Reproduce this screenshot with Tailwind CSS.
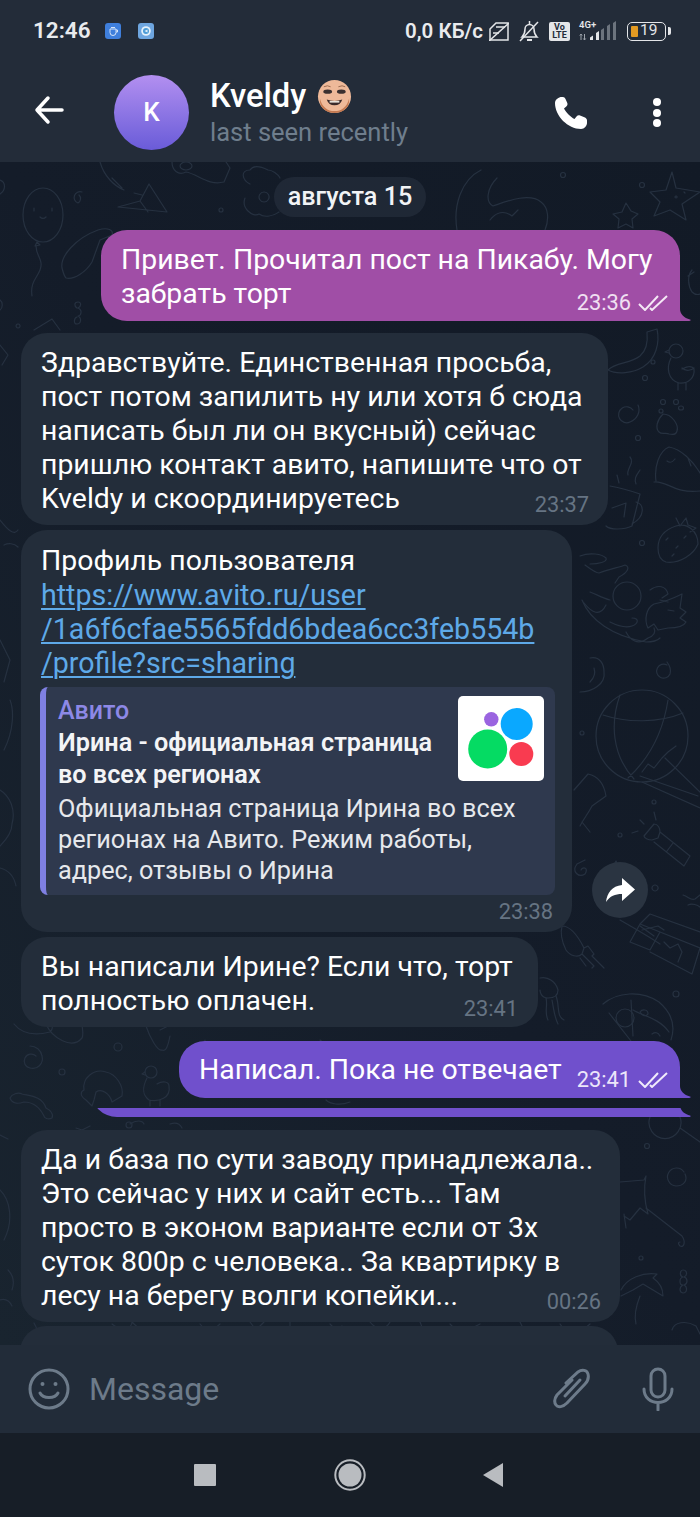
<!DOCTYPE html>
<html lang="ru">
<head>
<meta charset="UTF-8">
<title>Kveldy</title>
<script src="https://cdn.jsdelivr.net/npm/@tailwindcss/browser@4"></script>
</head>
<body class="bg-[#141c28] font-['Roboto',sans-serif] text-white">
<div class="w-[700px] h-[1517px] flex flex-col overflow-hidden">

  <!-- status bar + toolbar -->
  <header class="bg-[#232c39] h-[162px] shrink-0">
    <div class="h-[62px] flex items-center pl-[33px] pr-[29px] text-[#e9ebee]">
      <span class="text-[22.500px] font-semibold">12:46</span>
      <svg class="ml-[14px]" width="16" height="16" viewBox="0 0 16 16"><rect width="16" height="16" rx="3" fill="#3f7fdc"/><path d="M5 6h6v3.500a3 3 0 0 1-6 0zM11 7h1.500v2H11M6 4.500h4" fill="none" stroke="#d5e4f8" stroke-width="1"/></svg>
      <svg class="ml-[17px]" width="16" height="16" viewBox="0 0 16 16"><rect width="16" height="16" rx="3" fill="#6ea6e0"/><circle cx="8" cy="8" r="4.800" fill="#e4f1fb"/><circle cx="8" cy="8" r="3" fill="#4a9ad6"/><path d="M6.500 8 9.500 6.500V9.500z" fill="#e4f1fb"/></svg>
      <span class="ml-auto text-[20.500px] font-semibold">0,0 КБ/с</span>
      <svg class="ml-[6px]" width="20" height="20" viewBox="0 0 20 20" fill="none" stroke="#e4e6e9" stroke-width="1.500"><path d="M1 8 7 2h12v17H1z"/><path d="M0 20 20 2"/><path d="M7 6h9M4 12h6"/></svg>
      <svg class="ml-[10px]" width="21" height="22" viewBox="0 0 21 22" fill="none" stroke="#e4e6e9" stroke-width="1.500"><path d="M3 17c2-2 3-4 3-8a4.500 4.500 0 0 1 9 0c0 4 1 6 3 8z"/><path d="M8 20h5" stroke-width="2"/><path d="M10.500 1v3"/><path d="M1 21 19 2"/></svg>
      <div class="ml-[9px] w-[21px] h-[19px] rounded-[2px] bg-[#e4e6e9] flex flex-col items-center justify-center text-[#232c39] text-[9px] leading-[8.500px] font-bold"><span>Vo</span><span>LTE</span></div>
      <div class="ml-[9px] relative w-[38px] h-[20px]">
        <span class="absolute left-0 top-[-1px] text-[9.500px] font-semibold leading-[10px] text-[#e4e6e9]">4G+</span>
        <svg class="absolute left-0 top-0" width="38" height="20" viewBox="0 0 38 20"><path d="M2 19v-6M5.500 19v-6M0.800 14.500 2 13l1.200 1.500M4.300 17.500l1.200 1.500 1.200-1.500" stroke="#9ca3ab" stroke-width="1" fill="none"/><path d="M11 19v-2.500l3-2V19zM17 19v-7l3-2v9z" fill="#e4e6e9"/><path d="M22 19V9l3-2v12zM28 19V5l3-2v16zM34 19V2l3-2v19z" fill="#6c747e"/></svg>
      </div>
      <div class="ml-[10px] flex items-center">
        <div class="w-[39px] h-[19px] rounded-[5px] border-[1.600px] border-[#e4e6e9] flex items-center pl-[3px]">
          <span class="w-[7px] h-[11px] rounded-[1px] bg-[#e39a22]"></span>
          <span class="ml-[2px] text-[15.500px] leading-none text-[#e4e6e9]">19</span>
        </div>
        <span class="ml-[2px] w-[3px] h-[8px] rounded-r-[2px] bg-[#e4e6e9]"></span>
      </div>
    </div>
    <div class="h-[100px] flex items-start">
      <svg class="ml-[33px] mt-[33px]" width="32" height="30" viewBox="0 0 32 30" fill="none" stroke="#fff" stroke-width="3.500" stroke-linecap="round" stroke-linejoin="round"><path d="M29 15H4M15 3 4 15l11 12"/></svg>
      <div class="ml-[49px] mt-[13px] w-[75px] h-[75px] rounded-full bg-linear-to-b from-[#b38ff0] to-[#6a5bd8] flex items-center justify-center text-[26px] font-medium">K</div>
      <div class="ml-[21px] mt-[14px] flex flex-col">
        <div class="flex items-center h-[40px]">
          <span class="text-[32.700px] font-medium leading-none">Kveldy</span>
          <svg class="ml-[11px]" width="35" height="35" viewBox="0 0 36 36"><circle cx="18" cy="18" r="17" fill="#eeb999"/><path d="M3 20c2 9 8 13 15 13s13-4 15-13c1 9-6 15-15 15S2 29 3 20z" fill="#c47a52"/><ellipse cx="11" cy="13" rx="4.500" ry="2.200" fill="#3a3030"/><ellipse cx="25" cy="13" rx="4.500" ry="2.200" fill="#3a3030"/><path d="M7 8q4-2 7 0M22 8q4-2 7 0" stroke="#9a6a50" fill="none" stroke-width="1"/><path d="M10 21q8 3 16 0q-2 6-8 6t-8-6z" fill="#3a2a2a"/><path d="M13 22.500h10v1.800H13z" fill="#e8e2da"/></svg>
        </div>
        <span class="text-[25.500px] leading-[32px] text-[#6f7e8d]">last seen recently</span>
      </div>
      <svg class="ml-[146px] mt-[34px]" width="34" height="34" viewBox="0 0 34 34" fill="#fff"><path d="M7.500 1C5 1 1 3.500 1 7c0 13 13 26 26 26 3.500 0 6-3.500 6-6v-2.500c0-1.500-1-2.500-2-3l-5-2c-1.500-.5-2.500 0-3.500 1l-2 2.500c-4-2-8.500-6.500-10.500-10.500l2.300-2c1-1 1.500-2 1-3.500L11.500 3c-.5-1.200-1.500-2-2.500-2z"/></svg>
      <div class="ml-[65px] mt-[36px] flex flex-col gap-[2.500px]">
        <span class="w-[8px] h-[8px] rounded-full bg-white"></span>
        <span class="w-[8px] h-[8px] rounded-full bg-white"></span>
        <span class="w-[8px] h-[8px] rounded-full bg-white"></span>
      </div>
    </div>
  </header>

  <!-- chat -->
  <main class="relative h-[1183px] shrink-0 overflow-hidden bg-linear-to-tr from-[#19242f] via-[#141c29] to-[#121a26]">
    <!-- wallpaper doodles -->
    <svg class="absolute inset-0" width="700" height="1183" viewBox="0 162 700 1183" fill="none" stroke="#263140" stroke-width="1.200" stroke-linecap="round" stroke-linejoin="round">
      <!-- top left -->
      <ellipse cx="43" cy="215" rx="20" ry="27"/><path d="M34 208v3M52 208v3M40 217q3 3 6 0"/><path d="M37 242l-2 4 5-1zM36 246c0 10 8 14 4 24-3 8-10 12-8 26"/>
      <path d="M82 192a5 5 0 1 0-4 11 5 5 0 0 0 1-8"/>
      <path d="M118 207l22-6 9-17 18 28zM140 201l8 11M142 195l-8-2"/>
      <path d="M62 268c-2-12 14-30 36-38 10-3 16 0 14 5l-12 5-8 22c-6 10-18 18-26 16-2-2-3-6-4-10z"/>
      <path d="M100 162c4 14 14 24 24 28M112 178l10 10"/>
      <path d="M172 162c0 8 6 14 14 10 12 2 22 14 38 10l6-14-4-6M180 166a6 4 0 1 0 12 0 6 4 0 1 0-12 0"/>
      <path d="M250 184c-8-4-10-14 0-14 4-6 14-2 18 0 4 0 10 4 12 8M245 198c-4 10 8 20 14 16 6 4 14 2 20-2M264 192a5 5 0 1 0 .1 0"/>
      <circle cx="221" cy="210" r="2"/><path d="M77 308c-3-2-3-6 1-6s3 5 0 6c5 2 3 8 0 8 4 2 3 8-1 8s-3-6 0-7"/>
      <path d="M34 330l18-11 8 11M18 324a2 2 0 1 0 .1 0"/>
      <path d="M0 180c6 2 6 10 0 14M0 300c3 2 3 8 0 10"/>
      <!-- top right -->
      <path d="M457 230c-4-24 4-50 24-60M497 178c-10 10-12 24-4 28 12-4 36-14 48-4 8 6 8 18 4 28"/>
      <path d="M490 220c6-8 14-10 22-4l6-6"/>
      <circle cx="563" cy="175" r="2.500"/><circle cx="642" cy="185" r="2.500"/>
      <path d="M613 214l9-2 4-9 5 8 7 3-6 5 1 9-7-4-8 4 1-9z"/>
      <path d="M672 172l4 16 24 4-18 12 4 16-16-10-16 6 6-14-10-10 16-2zM676 196a1 1 0 1 0 .1 0M684 192l1 1"/>
      <path d="M692 270c-5 6-4 16 0 22 4 4 8 2 8 2M688 276l6-4"/>
      <!-- between bubbles, right column -->
      <path d="M608 370c8-8 22-6 32-14 7-6 8-14 7-24l10-3c3 14-1 30-14 38-10 6-26 8-35 3z"/>
      <circle cx="653" cy="362" r="2"/><circle cx="645" cy="378" r="2.500"/>
      <circle cx="676" cy="351" r="7"/><path d="M669 350l-4 2 4 1M671 358c-5 10-3 22 8 25 10 1 16-6 15-14-2-4-8-2-12 0M678 383v7M686 383v7M682 368c4 4 10 2 12 0"/>
      <path d="M633 410a8 8 0 1 0-3 12c7-3 11-10 8-17"/>
      <path d="M663 414c-6 6-8 14-4 18 3 3 7 0 10 2 4 1 7 1 8-3 2-6-5-17-14-17z"/><circle cx="663" cy="402" r="2.500"/><circle cx="676" cy="402" r="2.500"/><ellipse cx="681" cy="408" rx="2.500" ry="2"/><ellipse cx="661" cy="411" rx="2" ry="2"/>
      <circle cx="638" cy="438" r="2.500"/>
      <path d="M656 481c-2-14 3-30 13-34 12 2 24 14 31 26M654 482c12-2 20 12 46 9M667 461c3 2 5 2 8-2M688 458l3 8"/>
      <path d="M630 457c5 6-4 12-2 18M640 470c-4 6-6 8-4 14M617 475l2 8"/>
      <path d="M610 486c12 2 30 8 30 8l-8 32c-8 4-22 4-26 0M636 502c8 2 10 14-4 22M612 508l14-5-2 14"/>
      <path d="M658 548c0-10 6-18 18-22 12-4 22 6 22 18-4 10-18 20-32 18-6-2-8-8-8-14zM680 526l-4-8M680 526l6-8 2 7 8 3-6 4M666 540l2-2M676 548l2-2M684 538l2-2M672 556l2-2"/>
      <circle cx="642" cy="543" r="2.500"/>
      <path d="M580 556c10-4 22-2 26 2 2 4-8 6-16 6M585 565c8 6 12 8 14 8 10-4 22-6 26-8 6 2 2 8-6 12l-4 6"/>
      <circle cx="627" cy="596" r="14"/><path d="M610 600c-8-2-14-6-20-8M606 605c-6 12-14 8-22-2"/>
      <path d="M650 590c8-6 16-4 18 4l-6 4M648 628c-4-8-2-20 6-24 10-2 20-6 28-10l-2 14 6 4-6 6 6 4c-2 4-10 6-18 6l-10 2-4-6zM660 600l8 2M668 610l6 1"/>
      <path d="M582 600c8 20 30 36 64 42 6 0 12-2 14-4M626 632c4 8 12 14 22 6 6-2 8-6 6-10M610 622c8 4 16 6 22 4 6-2 8-8 0-8"/>
      <path d="M590 658c10-2 14 6 14 14 2 12-12 20-24 20M594 668c2 6 0 10-4 14"/>
      <path d="M667 665a7 7 0 1 0 3 9c1-3 0-8-3-12"/>
      <!-- balloon -->
      <circle cx="642" cy="736" r="46"/><path d="M603 715c24 8 56 8 80-2M620 695c-10 28-8 60 14 84M668 700c-4 26-14 54-40 78"/>
      <path d="M642 772l6-8 6 4 8-10 6-6 8-6"/><path d="M640 776l58 20M642 782l58 26M665 758l35 34"/><circle cx="582" cy="733" r="2"/>
      <circle cx="654" cy="802" r="2"/><path d="M654 812l2 8M640 820l4 4M632 833l6-2"/><circle cx="620" cy="835" r="2"/>
      <path d="M644 836l10-12c4 0 6 4 6 8l-2 6-6 2c-4 0-8-2-8-4zM660 832l30 24-6 10-30-24M673 843l-6 8"/>
      <path d="M574 790l14-16c10 2 16 10 18 22l-14 10c-4 8-8 12-12 20M582 822l8 10"/>
      <path d="M585 860l-8 4c-6 8 2 14 8 10 4-6-2-8-4-4"/>
      <path d="M683 895c6 2 8 6 12 4l5-4M688 905c4-2 10 0 12 2M655 885a3 3 0 1 0 .1 0"/>
      <path d="M612 870l4-9 4 9 10 1-7 6 2 9"/>
      <path d="M640 926l14 10M642 930l16-4 6 4"/><path d="M620 920c14 8 34 20 40 24"/>
      <!-- squid, chocolate -->
      <path d="M562 926c8 0 16 10 22 22l-2 6c-4 4-12 2-16-4-4-8-6-16-4-24zM584 948l4-2 6 8-2 2 12 12M582 954l12 12-2 2M580 958l6 8"/>
      <path d="M640 924l10-10 50 18M630 942l10-18 20 8-10 18zM660 932l40 16-8 26-42-22M664 942l6 6 8-4 4 8-4 10"/>
      <path d="M540 978c8-2 16 4 18 12 0 6-4 8-10 8-8 0-8-8-8-8M546 998c2 8-2 14 2 22M556 996c4 10 0 20 8 24M552 1000c2 10 2 16 6 24"/>
      <!-- pizza -->
      <path d="M603 1004c14-12 38-14 56-2 14 12 16 26 12 38M609 1013l22 28M631 1000l2 36M633 1010c10 6 26 8 36 22"/>
      <circle cx="625" cy="1018" r="9"/><path d="M640 1012c2-3 8-3 8 2-2 3-6 2-8-2zM652 1034c3-2 6-2 8 2"/>
      <circle cx="676" cy="994" r="3"/>
      <path d="M650 1117a16 16 0 1 0 30 0M680 1128l20 14"/>
      <!-- umbrella etc -->
      <circle cx="647" cy="1146" r="2.500"/>
      <path d="M684 1172a9 9 0 1 0-8 14c8 0 12-6 9-12"/>
      <path d="M620 1182l24-2 2-4c-2 10-2 24 2 38l-8-6-10 12-6-4M646 1208l36 28c4 6 2 12-2 10-2-2-2-4 0-4M624 1214l2 14"/>
      <circle cx="641" cy="1258" r="2"/>
      <path d="M683 1270c-3 0-4 6 0 7-4 1-4 8 0 8-4 2-4 7 0 8 4 0 5-6 1-8 4-1 4-7 0-8 4-2 3-7-1-7z"/>
      <path d="M621 1290c6-12 22-18 36-16l-4 4c6 4 10 10 10 18l-20-12-10 6-12 6M640 1296c-4 10-6 20-4 28"/>
      <path d="M672 1330c2-8 14-10 24-4l4 8"/>
      <!-- left strip -->
      <path d="M0 345l8 10-6 10M0 520c8 10 14 16 18 10M4 545c4-2 10-2 14 2M0 640l10 20-6 22M10 700c4 10 4 30-6 50M0 790c10 6 16 20 12 34 0 10-8 18-12 22M0 868c8 2 14 8 16 18"/>
      <!-- lower band -->
      <path d="M14 1024c8 10 20 12 36 8 4-4 2-8 2-8M46 1024c6 14 26 26 36 14 2-4 0-10 0-14"/>
      <path d="M146 1026c4 12 12 26 16 24 4 2 6-4 8-14M160 1030l8-4"/>
      <circle cx="118" cy="1047" r="4"/><circle cx="62" cy="1072" r="3"/>
      <path d="M36 1056a7 7 0 1 0-6 12c7 2 14-4 12-12-1-6-6-10-12-10"/>
      <path d="M86 1100c-6-4-6-8-2-10-2-12 10-22 22-18 10 2 18 14 16 24l-10 6c-2-8-10-14-16-10l-2 8-2 6z"/>
      <circle cx="151" cy="1072" r="6"/><path d="M145 1072l-3 2 3 1M147 1078c-4 8-6 16 2 22 10 2 22-2 20-14 0-4-6-6-12-2M150 1100v6M160 1100v6"/>
      <path d="M10 1098c2-4 8-6 12-4 8 2 20 2 24 14 4 2 8 6 6 10-4 2-8 0-8-2-4-8-10-14-20-14-6 2-12 2-14-4z"/>
      <path d="M205 1040c-2 12 6 24 16 24 4-2 4-8 4-14M230 1050c6 10 22 12 28 2M200 1090c8 4 16 2 22 0M280 1090c6 10 14 8 20 0"/>
      <path d="M305 1048c10-8 24-4 28 6M326 1100c4 4 14 6 24 2M320 1040l8 6"/>
      <path d="M76 1128l6 2 8-4M130 1124c6-4 12-4 14 0M170 1124c6-2 10 0 12 4"/><circle cx="129" cy="1125" r="3"/>
      <path d="M0 1135l8 4M0 1190c10 10 14 30 4 50M8 1270c6 6 6 14 4 20M0 1300c6-2 10 2 12 6"/>
      <path d="M34 1323l6 12 30-8 4 10M112 1324c10 8 20 4 20-2 6 6 12 12 18 6M200 1324c6 8 14 6 20 0M290 1322v14M370 1322c6 8 16 8 20 0M450 1324l10 10 20-10M560 1324c6 10 20 10 30 0M250 1322l6 8 8-8M330 1324l6 6 6-4M420 1322l4 10M520 1322l4 8"/>
    </svg>

    <div class="relative flex flex-col">
      <div class="self-center mt-[15px] h-[40px] px-[14px] rounded-[20px] bg-[#232c39]/80 flex items-center text-[25.200px] font-medium text-[#f1f3f5]">августа 15</div>

      <!-- 23:36 -->
      <div class="relative self-end mt-[13px] mr-[20px] w-[579px] h-[91px] bg-[#a04ea6] rounded-t-[26px] rounded-bl-[26px] pl-[20px] pt-[13px] text-[28.400px] leading-[34px] whitespace-nowrap">
        Привет. Прочитал пост на Пикабу. Могу<br>забрать торт
        <div class="absolute right-[12px] bottom-[6px] flex items-center gap-[7px] text-[21.800px] leading-[24px] text-[#f0e0f2]">
          <span>23:36</span>
          <svg width="30" height="16" viewBox="0 0 30 16" fill="none" stroke="#f4e8f5" stroke-width="2"><path d="M1 9l6 6L20 1M12 13l2 2L29 1"/></svg>
        </div>
        <svg class="absolute left-full bottom-0" width="11" height="12" viewBox="0 0 11 12" fill="#a04ea6"><path d="M0 0c0 5 4 9 10 10.500 1 .3 1 1.500-1 1.500H0z"/></svg>
      </div>

      <!-- 23:37 -->
      <div class="relative self-start mt-[12px] ml-[21px] w-[587px] h-[192px] bg-[#232d3a] rounded-[26px] pl-[20px] pt-[13px] text-[28.400px] leading-[34px] whitespace-nowrap">
        Здравствуйте. Единственная просьба,<br>пост потом запилить ну или хотя б сюда<br>написать был ли он вкусный) сейчас<br>пришлю контакт авито, напишите что от<br>Kveldy и скоординируетесь
        <span class="absolute right-[19px] bottom-[8px] text-[21.800px] leading-[24px] text-[#667483]">23:37</span>
      </div>

      <!-- 23:38 with link preview -->
      <div class="relative self-start mt-[5px] ml-[21px] w-[551px] h-[402px] bg-[#232d3a] rounded-[26px] pl-[20px] pt-[14px] text-[28.400px] leading-[34px] whitespace-nowrap">
        <div>Профиль пользователя</div>
        <div class="text-[28.600px] leading-[34px] text-[#5ea9e8] underline underline-offset-[3px] decoration-[1.500px]">https://www.avito.ru/user<br>/1a6f6cfae5565fdd6bdea6cc3feb554b<br>/profile?src=sharing</div>
        <div class="mt-[7px] ml-[-1px] w-[515px] h-[208px] rounded-[8px] bg-[#2f394e] border-l-[6px] border-[#7f80e2] pl-[12px] pt-[8px] relative">
          <div class="text-[25px] leading-[32px] font-medium text-[#8d88e6]">Авито</div>
          <div class="text-[25.250px] leading-[32px] font-semibold text-[#f3f4f6]">Ирина - официальная страница<br>во всех регионах</div>
          <div class="text-[25.250px] leading-[31px] text-[#e6e8ec] mt-[2px]">Официальная страница Ирина во всех<br>регионах на Авито. Режим работы,<br>адрес, отзывы о Ирина</div>
          <svg class="absolute right-[11px] top-[9px]" width="86" height="85" viewBox="458 696 86 85"><rect x="458" y="696" width="86" height="85" rx="5" fill="#fff"/><circle cx="491.300" cy="719.300" r="7.200" fill="#9a64e0"/><circle cx="516.700" cy="724" r="16" fill="#0aa8ff"/><circle cx="487.700" cy="749" r="19.500" fill="#05db63"/><circle cx="521.300" cy="754" r="12" fill="#f93b50"/></svg>
        </div>
        <span class="absolute right-[19px] bottom-[8px] text-[21.800px] leading-[24px] text-[#667483]">23:38</span>
      </div>

      <!-- 23:41 -->
      <div class="relative self-start mt-[5px] ml-[21px] w-[517px] h-[90px] bg-[#232d3a] rounded-[26px] pl-[20px] pt-[13px] text-[28.400px] leading-[34px] whitespace-nowrap">
        Вы написали Ирине? Если что, торт<br>полностью оплачен.
        <span class="absolute right-[20px] bottom-[6px] text-[21.800px] leading-[24px] text-[#667483]">23:41</span>
      </div>

      <!-- 23:41 out -->
      <div class="relative self-end mt-[14px] mr-[20px] w-[501px] h-[57px] bg-[#7050cc] rounded-t-[26px] rounded-bl-[26px] pl-[20px] pt-[12px] text-[28.400px] leading-[34px] whitespace-nowrap">
        Написал. Пока не отвечает
        <div class="absolute right-[12px] bottom-[6px] flex items-center gap-[7px] text-[21.800px] leading-[24px] text-[#ece6fa]">
          <span>23:41</span>
          <svg width="30" height="16" viewBox="0 0 30 16" fill="none" stroke="#f0ebfb" stroke-width="2"><path d="M1 9l6 6L20 1M12 13l2 2L29 1"/></svg>
        </div>
        <svg class="absolute left-full bottom-0" width="11" height="12" viewBox="0 0 11 12" fill="#7050cc"><path d="M0 0c0 5 4 9 10 10.500 1 .3 1 1.500-1 1.500H0z"/></svg>
      </div>

      <div class="self-end mt-[10px] mr-[9px] w-[600px] h-[9px] overflow-hidden">
        <div class="relative mt-[-51px] w-[589px] h-[60px] bg-[#7050cc] rounded-bl-[26px]">
          <svg class="absolute left-full bottom-0" width="11" height="12" viewBox="0 0 11 12" fill="#7050cc"><path d="M0 0c0 5 4 9 10 10.500 1 .3 1 1.500-1 1.500H0z"/></svg>
        </div>
      </div>

      <!-- 00:26 -->
      <div class="relative self-start mt-[13px] ml-[21px] w-[599px] h-[192px] bg-[#232d3a] rounded-[26px] pl-[20px] pt-[13px] text-[28.400px] leading-[34px] whitespace-nowrap">
        Да и база по сути заводу принадлежала..<br>Это сейчас у них и сайт есть... Там<br>просто в эконом варианте если от 3х<br>суток 800р с человека.. За квартирку в<br>лесу на берегу волги копейки...
        <span class="absolute right-[19px] bottom-[8px] text-[21.800px] leading-[24px] text-[#667483]">00:26</span>
      </div>

      <div class="self-start mt-[4px] ml-[20px] w-[598px] h-[60px] bg-[#232d3a] rounded-t-[26px]"></div>
    </div>

    <!-- forward button -->
    <button class="absolute left-[592px] top-[700px] w-[56px] h-[56px] rounded-full bg-[#2a3441] flex items-center justify-center">
      <svg width="30" height="26" viewBox="0 0 30 26" fill="#fff"><path d="M17 1l13 11.500L17 24v-7C10 17 5 19 1 25c1-9 6-16 16-17z"/></svg>
    </button>
  </main>

  <!-- composer -->
  <div class="h-[88px] shrink-0 bg-[#222c39] flex items-center relative">
    <svg class="ml-[28px]" width="42" height="42" viewBox="0 0 42 42" fill="none" stroke="#6d7b8a" stroke-width="3"><circle cx="21" cy="21" r="19"/><path d="M12 25c3 6 15 6 18 0" stroke-linecap="round"/><circle cx="14.500" cy="16" r="2" fill="#6d7b8a" stroke="none"/><circle cx="27.500" cy="16" r="2" fill="#6d7b8a" stroke="none"/></svg>
    <span class="ml-[19px] text-[32px] text-[#6d7b8a]">Message</span>
    <svg class="ml-auto" width="38" height="42" viewBox="0 0 38 42" fill="none" stroke="#6d7b8a" stroke-width="3" stroke-linecap="round"><path d="M13 15 25 4c4-3 9-2 10 2s0 7-3 10L14 35c-4 4-9 5-11 2s-2-6 1-10L19 12"/><path d="M27 12 12 28"/></svg>
    <svg class="ml-[51px] mr-[26px]" width="32" height="44" viewBox="0 0 32 44" fill="none" stroke="#6d7b8a" stroke-width="3" stroke-linecap="round"><rect x="9" y="2" width="14" height="28" rx="7"/><path d="M2 22c0 18 28 18 28 0M16 36v7"/></svg>
  </div>

  <!-- navigation bar -->
  <div class="h-[84px] shrink-0 bg-[#171e27] flex items-center">
    <span class="ml-[194px] w-[22px] h-[22px] bg-[#b9bcc0] rounded-[1px]"></span>
    <svg class="ml-[118px]" width="32" height="32" viewBox="0 0 32 32"><circle cx="16" cy="16" r="14.700" fill="none" stroke="#b9bcc0" stroke-width="2"/><circle cx="16" cy="16" r="11.500" fill="#b9bcc0"/></svg>
    <svg class="ml-[117px]" width="20" height="24" viewBox="0 0 20 24"><path d="M20 0v24L0 12z" fill="#b9bcc0"/></svg>
  </div>
</div>
</body>
</html>
